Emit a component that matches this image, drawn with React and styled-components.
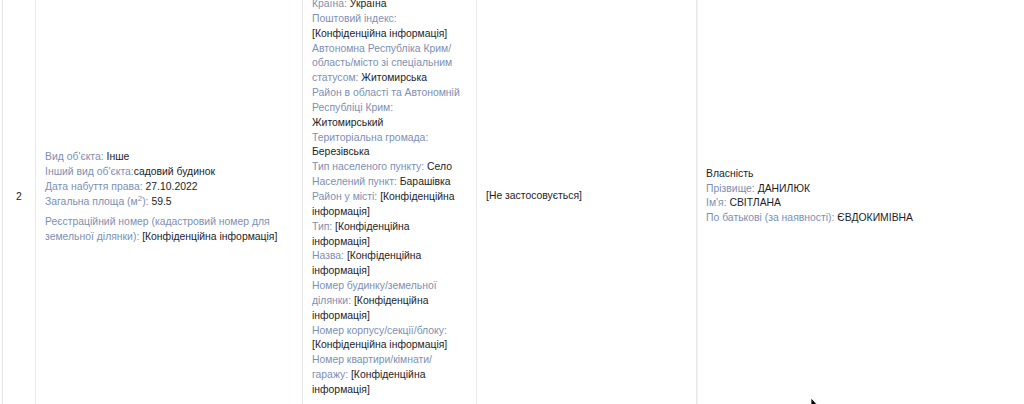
import React from "react";
import styled, { createGlobalStyle } from "styled-components";

const Global = createGlobalStyle`
  html, body { margin: 0; padding: 0; background: #fff; }
  body {
    font-family: "Liberation Sans", Arial, Helvetica, sans-serif;
    font-size: 10.4px;
    color: #1d1d1f;
    overflow: hidden;
  }
`;

const Viewport = styled.div`
  position: relative;
  width: 1024px;
  height: 404px;
  overflow: hidden;
  padding-left: 2px;
  box-sizing: border-box;
`;

const Table = styled.table`
  border-collapse: collapse;
  margin-top: -12px;
  table-layout: fixed;
  width: 1040px;
`;

const Col = styled.col`
  width: ${(p) => p.$w}px;
`;

const Cell = styled.td`
  border: 1px solid #e6e8ec;
  padding: 8px 9px;
  vertical-align: middle;
  text-align: ${(p) => (p.$center ? "center" : "left")};
  line-height: 14.85px;
  font-size: 10.4px;
  color: #1d1d1f;
`;

const OwnerCell = styled(Cell)`
  box-shadow: inset 6px 0 0 -5px #f3f4f6;
`;

const OwnerBlock = styled.div`
  padding-top: ${(p) => (p.$up ? "0" : "0")};
  margin-top: -2px;
`;

const Item = styled.div`
  margin-top: ${(p) => (p.$gap ? "5px" : "0")};
`;

const Label = styled.span`
  color: #7d8fb3;
`;

const Value = styled.span`
  color: #1d1d1f;
`;

const Sup = styled.sup`
  font-size: 8px;
  line-height: 0;
`;

const Cursor = styled.svg`
  position: absolute;
  left: 810px;
  top: 398px;
  width: 10px;
  height: 14px;
  pointer-events: none;
`;

const Field = ({ label, children, gap }) => (
  <Item $gap={gap}>
    <Label>{label}</Label>
    <Value>{children}</Value>
  </Item>
);

const C = "[Конфіденційна інформація]";

const address = [
  ["Країна: ", "Україна"],
  ["Поштовий індекс: ", C],
  ["Автономна Республіка Крим/ область/місто зі спеціальним статусом: ", "Житомирська"],
  ["Район в області та Автономній Республіці Крим: ", "Житомирський"],
  ["Територіальна громада: ", "Березівська"],
  ["Тип населеного пункту: ", "Село"],
  ["Населений пункт: ", "Барашівка"],
  ["Район у місті: ", C],
  ["Тип: ", C],
  ["Назва: ", C],
  ["Номер будинку/земельної ділянки: ", C],
  ["Номер корпусу/секції/блоку: ", C],
  ["Номер квартири/кімнати/ гаражу: ", C],
];

export default function App() {
  return (
    <>
      <Global />
      <Viewport>
        <Table>
          <colgroup>
            <Col $w={33} />
            <Col $w={267} />
            <Col $w={174} />
            <Col $w={220} />
            <Col $w={346} />
          </colgroup>
          <tbody>
            <tr>
              <Cell $center>2</Cell>
              <Cell>
                <Field label="Вид об'єкта: ">Інше</Field>
                <Field label="Інший вид об'єкта:">садовий будинок</Field>
                <Field label="Дата набуття права: ">27.10.2022</Field>
                <Item>
                  <Label>
                    Загальна площа (м<Sup>2</Sup>):{" "}
                  </Label>
                  <Value>59.5</Value>
                </Item>
                <Field gap label="Реєстраційний номер (кадастровий номер для земельної ділянки): ">
                  {C}
                </Field>
              </Cell>
              <Cell>
                {address.map(([l, v], i) => (
                  <Field key={i} label={l}>
                    {v}
                  </Field>
                ))}
              </Cell>
              <Cell>
                <OwnerBlock>[Не застосовується]</OwnerBlock>
              </Cell>
              <OwnerCell>
                <OwnerBlock>
                  <Item>Власність</Item>
                  <Field label="Прізвище: ">ДАНИЛЮК</Field>
                  <Field label="Ім'я: ">СВІТЛАНА</Field>
                  <Field label="По батькові (за наявності): ">ЄВДОКИМІВНА</Field>
                </OwnerBlock>
              </OwnerCell>
            </tr>
          </tbody>
        </Table>
        <Cursor viewBox="0 0 10 14">
          <path d="M1 0 L1 11 L3.5 8.5 L5.5 13 L7 12.3 L5 8 L8.5 8 Z" fill="#000" stroke="#fff" strokeWidth="0.8" />
        </Cursor>
      </Viewport>
    </>
  );
}
